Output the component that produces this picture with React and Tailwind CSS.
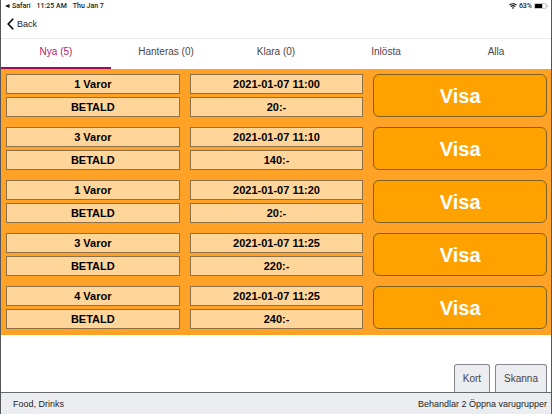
import React from 'react';

const tabs = ['Nya (5)', 'Hanteras (0)', 'Klara (0)', 'Inlösta', 'Alla'];

const orders = [
  { id: 1, items: '1 Varor', status: 'BETALD', time: '2021-01-07 11:00', price: '20:-' },
  { id: 2, items: '3 Varor', status: 'BETALD', time: '2021-01-07 11:10', price: '140:-' },
  { id: 3, items: '1 Varor', status: 'BETALD', time: '2021-01-07 11:20', price: '20:-' },
  { id: 4, items: '3 Varor', status: 'BETALD', time: '2021-01-07 11:25', price: '220:-' },
  { id: 5, items: '4 Varor', status: 'BETALD', time: '2021-01-07 11:25', price: '240:-' },
];

const StatusBar = () => (
  <div className="flex h-3 items-center justify-between pl-1 pr-[3px] font-[Roboto,sans-serif] text-[7px] font-medium leading-3 text-[#222]">
    <div className="flex items-center gap-[6px]">
      <span className="flex items-center gap-[2px]">
        <svg viewBox="0 0 5 4" className="h-1 w-[5px]" fill="#111">
          <path d="M0 2 4.5 0v4z" />
        </svg>
        Safari
      </span>
      <span>11:25 AM</span>
      <span>Thu Jan 7</span>
    </div>
    <div className="flex items-center gap-[2px]">
      <svg viewBox="0 0 16 12" className="h-[6px] w-2" fill="none" stroke="#111" strokeWidth="2.2">
        <path d="M1 4.4a10.5 10.5 0 0 1 14 0M3.6 7.3a6.6 6.6 0 0 1 8.8 0" />
        <path d="M8 11.8 5.6 9.4a3.6 3.6 0 0 1 4.8 0z" fill="#111" stroke="none" />
      </svg>
      <span>63%</span>
      <svg viewBox="0 0 28 12" className="h-[6px] w-[14px]">
        <rect x="0.75" y="0.75" width="23.5" height="10.5" rx="3" fill="none" stroke="#999" strokeWidth="1.2" />
        <rect x="2" y="2" width="14.5" height="8" rx="1.2" fill="#000" />
        <path d="M25.8 4v4c1-.3 1.6-1 1.6-2s-.6-1.7-1.6-2z" fill="#999" />
      </svg>
    </div>
  </div>
);

const Cell = ({ children }) => (
  <div className="flex h-5 items-center justify-center border border-[#8c7148] bg-[#ffd599] text-[11px] font-bold leading-4 text-black">
    {children}
  </div>
);

const OrderRow = ({ order }) => (
  <li className="grid grid-cols-3 gap-[10px]">
    <div className="flex flex-col gap-[3px]">
      <Cell>{order.items}</Cell>
      <Cell>{order.status}</Cell>
    </div>
    <div className="flex flex-col gap-[3px]">
      <Cell>{order.time}</Cell>
      <Cell>{order.price}</Cell>
    </div>
    <button
      type="button"
      className="rounded-[6px] border border-[#80601f] bg-[#ffa200] text-[20px] font-bold leading-6 text-white"
    >
      Visa
    </button>
  </li>
);

const ActionButton = ({ children }) => (
  <button
    type="button"
    className="h-7 rounded-t-[3px] border border-b-0 border-[#85868c] bg-[#ecedf0] px-2 text-[10px] leading-4 text-[#4a4043]"
  >
    {children}
  </button>
);

const App = () => (
  <div className="flex min-h-screen flex-col border-x border-[#55565a] bg-white font-['Liberation_Sans',Arial,sans-serif]">
    <header className="border-b border-[#e9e9ea] pb-[6px]">
      <StatusBar />
      <button type="button" className="mt-1 flex h-4 items-center gap-[3px] pl-[6px] text-[9px] leading-4 text-[#1c1c1c]">
        <svg viewBox="0 0 7 12" className="h-3 w-[7px]" fill="none" stroke="#000" strokeWidth="1.6">
          <path d="M6.2.8 1.2 6l5 5.2" />
        </svg>
        Back
      </button>
    </header>

    <nav className="grid grid-cols-5">
      {tabs.map((tab, i) => (
        <button
          key={tab}
          type="button"
          className={`h-[30px] border-b-2 pb-[2px] text-[10px] leading-4 ${
            i === 0 ? 'border-[#a3085a] text-[#b3236b]' : 'border-transparent text-[#4d4548]'
          }`}
        >
          {tab}
        </button>
      ))}
    </nav>

    <main className="flex flex-1 flex-col">
      <ul className="flex flex-col gap-[10px] bg-[#ffa226] pb-[6px] pl-[5px] pr-1 pt-[5px]">
        {orders.map((order) => (
          <OrderRow key={order.id} order={order} />
        ))}
      </ul>
      <div className="mt-auto flex justify-end gap-[5px] pr-1">
        <ActionButton>Kort</ActionButton>
        <ActionButton>Skanna</ActionButton>
      </div>
    </main>

    <footer className="flex h-[22px] items-center justify-between border-t border-[#66676f] bg-[#ecedf0] pl-3 pr-1 text-[9px] leading-4 text-[#1d1d1f]">
      <span>Food, Drinks</span>
      <span>Behandlar 2 Öppna varugrupper</span>
    </footer>
  </div>
);

export default App;
